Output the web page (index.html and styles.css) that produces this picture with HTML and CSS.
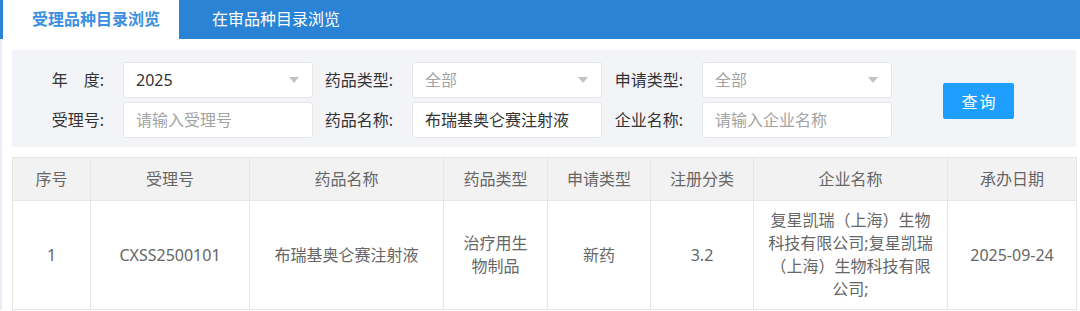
FILE: index.html
```html
<!DOCTYPE html>
<html lang="zh-CN">
<head>
<meta charset="utf-8">
<title>受理品种目录浏览</title>
<link rel="stylesheet" href="styles.css">
</head>
<body>
<div class="tabs">
  <div class="tab tab-active">受理品种目录浏览</div>
  <div class="tab tab-2">在审品种目录浏览</div>
</div>
<div class="content">
  <div class="filter">
    <div class="fields">
      <label class="lbl lbl-1">年　度:</label>
      <div class="box select"><span class="val">2025</span><i class="caret"></i></div>
      <label class="lbl">药品类型:</label>
      <div class="box select"><span class="ph">全部</span><i class="caret"></i></div>
      <label class="lbl">申请类型:</label>
      <div class="box select"><span class="ph">全部</span><i class="caret"></i></div>

      <label class="lbl lbl-1">受理号:</label>
      <div class="box"><span class="ph">请输入受理号</span></div>
      <label class="lbl">药品名称:</label>
      <div class="box"><span class="val">布瑞基奥仑赛注射液</span></div>
      <label class="lbl">企业名称:</label>
      <div class="box"><span class="ph">请输入企业名称</span></div>
    </div>
    <button class="btn" type="button">查询</button>
  </div>

  <table class="grid">
    <colgroup>
      <col class="c1"><col class="c2"><col class="c3"><col class="c4">
      <col class="c5"><col class="c6"><col class="c7"><col class="c8">
    </colgroup>
    <thead>
      <tr>
        <th>序号</th><th>受理号</th><th>药品名称</th><th>药品类型</th>
        <th>申请类型</th><th>注册分类</th><th>企业名称</th><th>承办日期</th>
      </tr>
    </thead>
    <tbody>
      <tr>
        <td>1</td>
        <td>CXSS2500101</td>
        <td>布瑞基奥仑赛注射液</td>
        <td>治疗用生物制品</td>
        <td>新药</td>
        <td>3.2</td>
        <td class="company">复星凯瑞（上海）生物科技有限公司;复星凯瑞（上海）生物科技有限公司;</td>
        <td>2025-09-24</td>
      </tr>
    </tbody>
  </table>
</div>
</body>
</html>
```

FILE: styles.css
```css
html, body {
  margin: 0;
  padding: 0;
  background: #ffffff;
  overflow: hidden;
}

body {
  font-family: "Noto Sans", "Noto Sans CJK SC", sans-serif;
  font-size: 16px;
  color: #333333;
}

/* ---------- tabs ---------- */
.tabs {
  display: flex;
  height: 39px;
  background: #2b83d6;
  padding-left: 3px;
}

.tab {
  height: 39px;
  line-height: 39px;
  font-size: 16px;
  color: #ffffff;
  white-space: nowrap;
}

.tab-active {
  background: #ffffff;
  color: #3d8fdf;
  font-weight: bold;
  padding: 0 19px 0 29px;
}

.tab-2 {
  padding-left: 33px;
}

/* ---------- content ---------- */
.content {
  border-left: 2px solid #e8eef6;
  padding: 11px 4px 0 10px;
}

.filter {
  display: flex;
  align-items: center;
  background: #f3f4f7;
  padding: 12px 0 9px 0;
}

.fields {
  display: grid;
  grid-template-columns: 111px 190px 99px 190px 100px 190px;
  row-gap: 4px;
}

.lbl {
  display: block;
  text-align: right;
  padding-right: 19px;
  line-height: 36px;
  color: #333333;
  white-space: nowrap;
}

.lbl-1 {
  padding-right: 19px;
}

.box {
  box-sizing: border-box;
  height: 36px;
  background: #ffffff;
  border: 1px solid #e6e6e6;
  border-radius: 3px;
  display: flex;
  align-items: center;
  justify-content: space-between;
  padding: 0 12px;
  line-height: 34px;
  white-space: nowrap;
  overflow: hidden;
}

.val {
  color: #333333;
}

.ph {
  color: #a3a3a3;
}

.caret {
  width: 0;
  height: 0;
  border-left: 5px solid transparent;
  border-right: 5px solid transparent;
  border-top: 6px solid #c2c2c2;
  margin-right: 1px;
}

.btn {
  margin-left: 51px;
  margin-top: 2px;
  width: 71px;
  height: 36px;
  border: none;
  border-radius: 2px;
  background: #1e9fff;
  color: #ffffff;
  font-family: "Noto Sans", "Noto Sans CJK SC", sans-serif;
  font-size: 16px;
  letter-spacing: 2px;
  text-indent: 2px;
  padding: 0;
}

/* ---------- table ---------- */
.grid {
  margin-top: 10px;
  width: 1064px;
  border-collapse: collapse;
  table-layout: fixed;
  color: #666666;
}

.c1 { width: 78px; }
.c2 { width: 159px; }
.c3 { width: 194px; }
.c4 { width: 104px; }
.c5 { width: 103px; }
.c6 { width: 103px; }
.c7 { width: 194px; }
.c8 { width: 129px; }

.grid th,
.grid td {
  border: 1px solid #e6e6e6;
  text-align: center;
  vertical-align: middle;
  font-weight: normal;
  font-size: 16px;
}

.grid th {
  background: #f2f2f2;
  padding: 10px 15px;
  line-height: 22px;
}

.grid td {
  padding: 8px 15px;
  line-height: 23px;
}

.grid td.company {
  padding-left: 12px;
  padding-right: 12px;
}
```
